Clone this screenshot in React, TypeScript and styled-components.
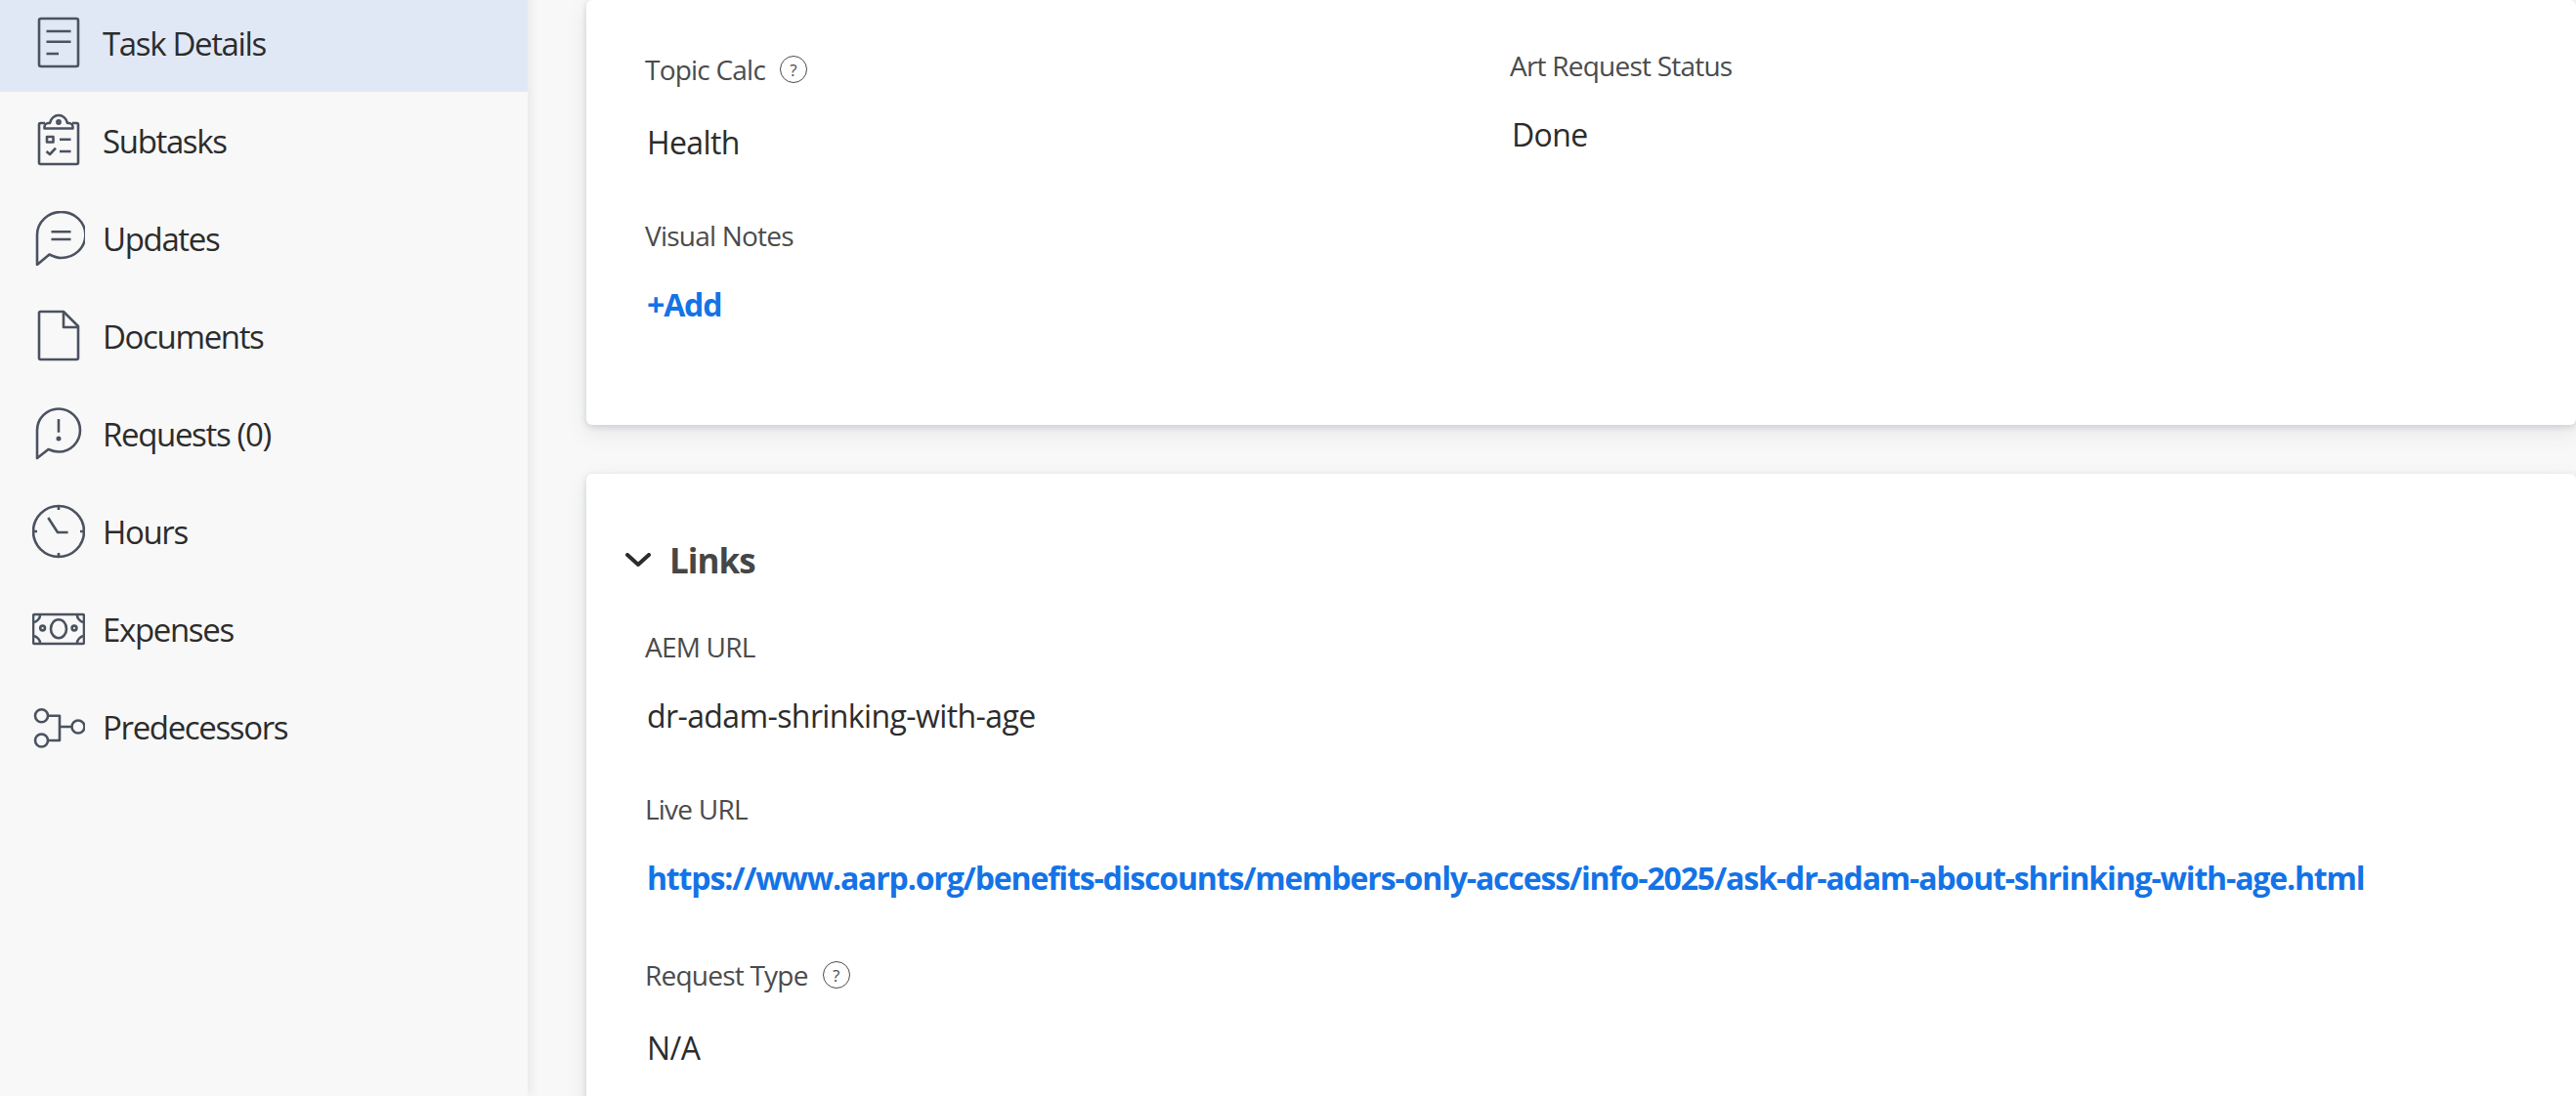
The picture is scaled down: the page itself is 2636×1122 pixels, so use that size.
import React from "react";
import styled, { createGlobalStyle } from "styled-components";

const GlobalStyle = createGlobalStyle`
  html, body {
    margin: 0;
    height: 100%;
    overflow: hidden;
    background: #f8f8f8;
    font-family: "Open Sans", "Noto Sans", Arial, sans-serif;
  }
`;

const Page = styled.div`
  display: flex;
  width: 2636px;
  height: 1122px;
  overflow: hidden;
  background: #f8f8f8;
`;

const Sidebar = styled.nav`
  width: 540px;
  flex: none;
  margin-top: -6px;
  padding-bottom: 6px;
  background: #f8f8f8;
  box-shadow: 4px 0 10px rgba(0, 0, 0, 0.06);
  position: relative;
  z-index: 1;
`;

const NavItem = styled.div<{ $active?: boolean }>`
  display: flex;
  align-items: center;
  gap: 18px;
  height: 100px;
  padding-left: 33px;
  background: ${(props) => (props.$active ? "#e1e8f5" : "transparent")};
  color: #2c2c2c;
  font-size: 33px;
  letter-spacing: -1.35px;
`;

const NavIconSvg = styled.svg`
  width: 54px;
  height: 56px;
  flex: none;
  fill: none;
  stroke: #4b5260;
  stroke-width: 2.6;
  stroke-linejoin: round;
`;

const Main = styled.main`
  flex: 1;
  min-width: 0;
  padding-left: 60px;
`;

const Card = styled.section`
  background: #fff;
  padding-left: 60px;
  border-radius: 6px;
  box-shadow:
    0 2px 6px rgba(60, 70, 90, 0.18),
    0 8px 22px rgba(60, 70, 90, 0.1);
`;

const FirstCard = styled(Card)`
  height: 435px;
  box-sizing: border-box;
  margin-bottom: 50px;
  padding-top: 52px;
`;

const LinksCard = styled(Card)`
  height: 700px;
  box-sizing: border-box;
  padding-top: 60px;
`;

const FieldGrid = styled.div`
  display: grid;
  grid-template-columns: 885px 1fr;
  align-items: start;
`;

const Field = styled.div`
  margin-bottom: 58px;
`;

const Label = styled.div`
  display: flex;
  align-items: center;
  gap: 15px;
  min-height: 30px;
  color: #4b4b4b;
  font-size: 28px;
  line-height: 30px;
  letter-spacing: -0.78px;
`;

const HelpIcon = styled.span`
  display: flex;
  align-items: center;
  justify-content: center;
  box-sizing: border-box;
  width: 28px;
  height: 28px;
  margin: 5px 0;
  border: 1px solid #4b4b4b;
  border-radius: 50%;
  color: #4b4b4b;
  font-size: 17px;
  letter-spacing: 0;
  line-height: 1;
`;

const Value = styled.div`
  margin-top: 34px;
  padding-left: 2px;
  color: #2c2c2c;
  font-size: 32px;
  line-height: 44px;
  letter-spacing: -0.6px;
`;

const LinkValue = styled(Value)`
  color: #1473e6;
  font-weight: 700;
  letter-spacing: -1.16px;
`;

const SectionHeader = styled.div`
  display: flex;
  align-items: center;
  gap: 19px;
  height: 56px;
  margin: 0 0 46px -20px;
  color: #464646;
  font-size: 35px;
  font-weight: 700;
  letter-spacing: -1px;
`;

const Chevron = styled.svg`
  width: 26px;
  height: 14px;
  fill: none;
  stroke: #2c2c2c;
  stroke-width: 4;
  stroke-linecap: round;
  stroke-linejoin: round;
`;

const icons: Record<string, React.ReactNode> = {
  details: (
    <>
      <rect x="7" y="3" width="40" height="49" rx="2" />
      <path d="M14.5 16H39.5M14.5 26.7H39.5M14.5 39H27" />
    </>
  ),
  subtasks: (
    <>
      <path d="M13 10H8.5A1.5 1.5 0 0 0 7 11.5V50.5A1.5 1.5 0 0 0 8.5 52H45.5A1.5 1.5 0 0 0 47 50.5V11.5A1.5 1.5 0 0 0 45.5 10H41" />
      <path d="M12.5 15.5V14A4 4 0 0 1 16.5 10H18C19 5 23 2 27 2C31 2 35 5 36 10H37.5A4 4 0 0 1 41.5 14V15.5Z" />
      <circle cx="27" cy="9" r="1.6" />
      <rect x="15" y="24" width="6.5" height="5.5" />
      <path d="M28 26.7H39.5M14.5 39L18 42L24 35.7M28 39H39.5" />
    </>
  ),
  updates: (
    <>
      <path d="M5 55V24.5A24.7 23.5 0 1 1 29.7 48C25.5 48 21.5 46.5 17.5 44.5Z" />
      <path d="M19.5 21.3H39.5M19.5 29H39.5" />
    </>
  ),
  documents: (
    <>
      <path d="M32 3H8.5A1.5 1.5 0 0 0 7 4.5V50.5A1.5 1.5 0 0 0 8.5 52H45.5A1.5 1.5 0 0 0 47 50.5V18Z" />
      <path d="M32 3V19H47" />
    </>
  ),
  requests: (
    <>
      <path d="M5 53V24.5A22 22 0 1 1 27 46.5C23.5 46.5 20 45.5 16.5 44Z" />
      <path d="M27 13V26.7" />
      <circle cx="27" cy="33" r="1.2" />
    </>
  ),
  hours: (
    <>
      <circle cx="27" cy="28" r="26" />
      <path d="M27 2V6M27 50V54M1 28H5M49 28H53M16.3 14L26 29H36.6" />
    </>
  ),
  expenses: (
    <>
      <rect x="1" y="13" width="52" height="30" rx="1.5" />
      <ellipse cx="27" cy="27.7" rx="8" ry="9.5" />
      <circle cx="10.6" cy="27" r="2.4" />
      <circle cx="43" cy="27" r="2.4" />
      <path d="M2 21C5 20 8 17 8 14M52 21C49 20 46 17 46 14M2 35C5 36 8 39 8 42M52 35C49 36 46 39 46 42" />
    </>
  ),
  predecessors: (
    <>
      <circle cx="9.5" cy="16.7" r="6.5" />
      <circle cx="9.5" cy="42" r="6.5" />
      <circle cx="47" cy="28" r="6.5" />
      <path d="M16 16.7H28V42H16M28 28H40.5" />
    </>
  ),
};

const navItems = [
  { icon: "details", label: "Task Details", active: true },
  { icon: "subtasks", label: "Subtasks" },
  { icon: "updates", label: "Updates" },
  { icon: "documents", label: "Documents" },
  { icon: "requests", label: "Requests (0)" },
  { icon: "hours", label: "Hours" },
  { icon: "expenses", label: "Expenses" },
  { icon: "predecessors", label: "Predecessors" },
];

export default function App() {
  return (
    <Page>
      <GlobalStyle />
      <Sidebar>
        {navItems.map((item) => (
          <NavItem key={item.label} $active={item.active}>
            <NavIconSvg viewBox="0 0 54 56">{icons[item.icon]}</NavIconSvg>
            <span>{item.label}</span>
          </NavItem>
        ))}
      </Sidebar>
      <Main>
        <FirstCard>
          <FieldGrid>
            <Field>
              <Label>
                Topic Calc <HelpIcon>?</HelpIcon>
              </Label>
              <Value>Health</Value>
            </Field>
            <Field>
              <Label>Art Request Status</Label>
              <Value>Done</Value>
            </Field>
            <Field>
              <Label>Visual Notes</Label>
              <LinkValue>+Add</LinkValue>
            </Field>
          </FieldGrid>
        </FirstCard>
        <LinksCard>
          <SectionHeader>
            <Chevron viewBox="0 0 26 14">
              <path d="M2 2L13 12L24 2" />
            </Chevron>
            Links
          </SectionHeader>
          <Field>
            <Label>AEM URL</Label>
            <Value>dr-adam-shrinking-with-age</Value>
          </Field>
          <Field>
            <Label>Live URL</Label>
            <LinkValue>
              https://www.aarp.org/benefits-discounts/members-only-access/info-2025/ask-dr-adam-about-shrinking-with-age.html
            </LinkValue>
          </Field>
          <Field>
            <Label>
              Request Type <HelpIcon>?</HelpIcon>
            </Label>
            <Value>N/A</Value>
          </Field>
        </LinksCard>
      </Main>
    </Page>
  );
}
